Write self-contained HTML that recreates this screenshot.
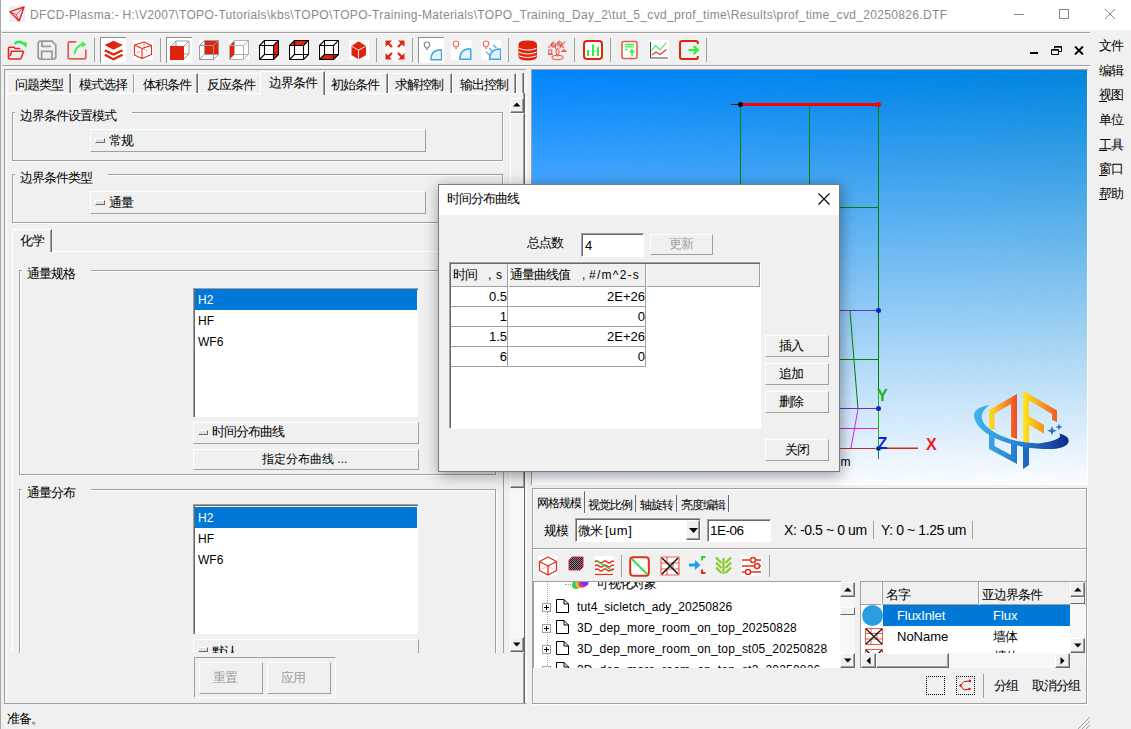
<!DOCTYPE html>
<html><head><meta charset="utf-8">
<style>
*{box-sizing:border-box}
html,body{margin:0;padding:0}
body{width:1131px;height:729px;overflow:hidden;position:relative;background:#f0f0f0;font-family:"Liberation Sans",sans-serif;font-size:12px;color:#000}
.a{position:absolute}
.t{position:absolute;white-space:nowrap;line-height:12px;font-size:12px}
.c{font-size:13px!important;letter-spacing:-1px;font-weight:500}
.hl{position:absolute;height:1px}
.vl{position:absolute;width:1px}
.btn{position:absolute;background:#f0f0f0;border-top:1px solid #fff;border-left:1px solid #fff;border-right:1px solid #a0a0a0;border-bottom:1px solid #a0a0a0}
.sunk{position:absolute;border-top:1px solid #a0a0a0;border-left:1px solid #a0a0a0;border-right:1px solid #fff;border-bottom:1px solid #fff}
.grp{position:absolute;border:1px solid #a0a0a0;box-shadow:1px 1px 0 #fff, inset 1px 1px 0 #fff}
.gl{position:absolute;background:#f0f0f0;font-size:13px;letter-spacing:-1px;font-weight:500;padding:0 16px 0 5px;line-height:12px;white-space:nowrap}
</style></head><body>

<!-- title bar -->
<div class="a" style="left:0;top:0;width:1131px;height:30px;background:#fff"></div>
<div class="vl" style="left:0;top:0;height:729px;background:#a8a8a8"></div>
<div class="t" style="left:30px;top:9px;color:#8a8a8a;letter-spacing:0.33px">DFCD-Plasma:- H:\V2007\TOPO-Tutorials\kbs\TOPO\TOPO-Training-Materials\TOPO_Training_Day_2\tut_5_cvd_prof_time\Results\prof_time_cvd_20250826.DTF</div>

<!-- toolbar lines -->
<div class="hl" style="left:2px;top:32px;width:1088px;background:#a0a0a0"></div>
<div class="hl" style="left:2px;top:33px;width:1088px;background:#fff"></div>
<div class="hl" style="left:2px;top:65px;width:1088px;background:#a0a0a0"></div>
<div class="hl" style="left:2px;top:66px;width:1088px;background:#fff"></div>

<!-- left panel -->
<div class="a" style="left:4px;top:69px;width:523px;height:635px;border-top:1px solid #a0a0a0;border-left:1px solid #a0a0a0;border-bottom:1px solid #a0a0a0;border-right:1px solid #fff"></div>

<!-- 3D view -->
<div class="a" style="left:531px;top:69px;width:557px;height:416px;background:#fff;border-top:1px solid #a0a0a0;border-left:1px solid #a0a0a0"></div>
<div class="a" style="left:532px;top:70px;width:555px;height:414px;background:linear-gradient(#0085ff,#fafcff)"></div>
<div class="a" style="left:532px;top:70px;width:555px;height:414px;background:linear-gradient(#0085dd,#fafcff);-webkit-mask-image:linear-gradient(to right,transparent,#000);mask-image:linear-gradient(to right,transparent,#000)"></div>
<!-- geometry -->
<svg class="a" style="left:532px;top:70px" width="556" height="414" viewBox="532 70 556 414">
<g stroke-width="1" fill="none">
<path d="M740.5 104V200M809.5 104V200M878.5 104V448" stroke="#008000"/>
<path d="M830 207.5H878.5M830 359.5H878.5" stroke="#008000"/>
<path d="M830 310.5H878.5M830 408.5H878.5" stroke="#7030c0"/>
<path d="M830 428.5H878.5" stroke="#e020e0"/>
<path d="M850 311L858 409" stroke="#008000"/>
<path d="M858 409L851 448" stroke="#e020e0"/>
<path d="M830 448.5H918" stroke="#c03018"/>
<path d="M878.5 448V459" stroke="#555"/>
<path d="M878.5 390V448" stroke="#20b020"/>
<path d="M878.5 448H918" stroke="#e82020"/>
<path d="M731 104.5H740" stroke="#222"/>
</g>
<path d="M740 104.5H878" stroke="#ff0000" stroke-width="3"/>
<circle cx="740.5" cy="104.5" r="2.5" fill="#200"/>
<circle cx="878.5" cy="104.5" r="2.5" fill="#ff0000"/>
<circle cx="878.5" cy="310.5" r="2.5" fill="#1020d0"/>
<circle cx="878.5" cy="408.5" r="2.5" fill="#1020d0"/>
<circle cx="878.5" cy="448.5" r="3" fill="#30e0e0"/>
<circle cx="878.5" cy="448.5" r="2" fill="#000"/>
<text x="877" y="401" font-family="Liberation Sans" font-weight="bold" font-size="16" fill="#20b020">Y</text>
<text x="877.5" y="449" font-family="Liberation Sans" font-weight="bold" font-size="16" fill="#1020e0">Z</text>
<text x="926" y="449.5" font-family="Liberation Sans" font-weight="bold" font-size="16" fill="#e82020">X</text>
<text x="840.5" y="466" font-family="Liberation Sans" font-size="12" fill="#000">m</text>
</svg>
<!-- logo -->
<svg class="a" style="left:968px;top:385px" width="107" height="90" viewBox="0 0 107 90">
<defs>
<linearGradient id="lgD" x1="21" y1="0" x2="49" y2="0" gradientUnits="userSpaceOnUse"><stop offset="0" stop-color="#ffe020"/><stop offset="1" stop-color="#ee4a26"/></linearGradient>
<linearGradient id="lgF" x1="55" y1="0" x2="89" y2="0" gradientUnits="userSpaceOnUse"><stop offset="0" stop-color="#ffe81a"/><stop offset="1" stop-color="#ee5a26"/></linearGradient>
<linearGradient id="lgS" x1="6" y1="0" x2="101" y2="0" gradientUnits="userSpaceOnUse"><stop offset="0" stop-color="#40b4ec"/><stop offset="0.5" stop-color="#2a80d0"/><stop offset="1" stop-color="#10288a"/></linearGradient>
<linearGradient id="lgB" x1="21" y1="0" x2="61" y2="0" gradientUnits="userSpaceOnUse"><stop offset="0" stop-color="#3aa4e4"/><stop offset="1" stop-color="#1f68c0"/></linearGradient>
</defs>
<path d="M21 25L49 9V54L43 52V19L26.5 28.5V45L21 43Z" fill="url(#lgD)"/>
<path d="M55 5.5L89 25.5V37L84 35V29L61 15.5V31L76 40V48.5L61 40V58L55 57Z" fill="url(#lgF)"/>
<path d="M21 45L26.5 47.5V61L43 70V56L49 57.5V79L21 64Z" fill="url(#lgB)"/>
<path d="M55 59L61 59.5V80L55 84Z" fill="#1f68c0"/>
<path d="M21.5 20Q5 23 6 31Q9 52 55 62Q97 68 100.5 57Q102 51 91 48.5Q97 55 70 58.5Q35 57 18 41Q8 30 21.5 20Z" fill="url(#lgS)"/>
<path d="M84 41l1.3 3.5l3.5 1.3l-3.5 1.3l-1.3 3.5l-1.3-3.5l-3.5-1.3l3.5-1.3Z" fill="#2a70c8"/>
<path d="M91 38.5l0.9 2.6l2.6 0.9l-2.6 0.9l-0.9 2.6l-0.9-2.6l-2.6-0.9l2.6-0.9Z" fill="#2a70c8"/>
</svg>

<!-- bottom right panel -->
<div class="a" style="left:532px;top:488px;width:555px;height:216px;border:1px solid #a0a0a0;box-shadow:inset 1px 1px 0 #fff,1px 1px 0 #fff"></div>


<!-- title icon -->
<svg class="a" style="left:9px;top:6px" width="16" height="16" viewBox="0 0 16 16">
<rect x="0" y="0" width="16" height="16" fill="#e9eef7"/>
<path d="M1 5.7L15 1L10.1 15Z" fill="none" stroke="#e8261a" stroke-width="1.4" stroke-linejoin="round"/>
<path d="M1 5.7L7.3 8.5L15 1M7.3 8.5L10.1 15" fill="none" stroke="#e8261a" stroke-width="0.9"/>
</svg>
<!-- window controls -->
<div class="hl" style="left:1014px;top:14px;width:10px;background:#8a8a8a"></div>
<div class="a" style="left:1059px;top:9px;width:10px;height:10px;border:1px solid #8a8a8a"></div>
<svg class="a" style="left:1105px;top:9px" width="10" height="10" viewBox="0 0 10 10"><path d="M0 0L10 10M10 0L0 10" stroke="#8a8a8a" stroke-width="1"/></svg>

<!-- MDI controls -->
<div class="a" style="left:1030px;top:52px;width:8px;height:2px;background:#000"></div>
<svg class="a" style="left:1051px;top:46px" width="11" height="9" viewBox="0 0 11 9"><path d="M3.5 2.5V0.5H10.5V5.5H7.5 M0.5 3.5H7.5V8.5H0.5Z M3.5 1.2H10.5 M0.5 4.2H7.5" fill="none" stroke="#000" stroke-width="1"/></svg>
<svg class="a" style="left:1074px;top:46px" width="10" height="9" viewBox="0 0 10 9"><path d="M1 0.5L9 8.5M9 0.5L1 8.5" stroke="#000" stroke-width="1.8"/></svg>

<!-- right menu -->
<div class="t c" style="left:1099px;top:39px;line-height:13px">文件</div>
<div class="t c" style="left:1099px;top:64px;line-height:13px">编辑</div>
<div class="t c" style="left:1099px;top:88px;line-height:13px">视图</div>
<div class="t c" style="left:1099px;top:113px;line-height:13px">单位</div>
<div class="t c" style="left:1099px;top:138px;line-height:13px">工具</div>
<div class="t c" style="left:1099px;top:162px;line-height:13px">窗口</div>
<div class="t c" style="left:1099px;top:187px;line-height:13px">帮助</div>
<div class="hl" style="left:1099px;top:101px;width:8px;background:#000"></div>
<div class="hl" style="left:1099px;top:150px;width:8px;background:#000"></div>
<div class="hl" style="left:1099px;top:175px;width:8px;background:#000"></div>
<div class="hl" style="left:1099px;top:199px;width:8px;background:#000"></div>

<!-- toolbar separators -->
<div class="vl" style="left:94px;top:38px;height:24px;background:#a0a0a0"></div>
<div class="vl" style="left:160px;top:38px;height:24px;background:#a0a0a0"></div>
<div class="vl" style="left:376px;top:38px;height:24px;background:#a0a0a0"></div>
<div class="vl" style="left:412px;top:38px;height:24px;background:#a0a0a0"></div>
<div class="vl" style="left:508px;top:38px;height:24px;background:#a0a0a0"></div>
<div class="vl" style="left:574px;top:38px;height:24px;background:#a0a0a0"></div>
<div class="vl" style="left:610px;top:38px;height:24px;background:#a0a0a0"></div>
<div class="vl" style="left:706px;top:38px;height:24px;background:#a0a0a0"></div>
<!-- pressed buttons -->
<div class="a" style="left:100px;top:37px;width:26px;height:26px;background:#fff;border-top:1px solid #8c8c8c;border-left:1px solid #8c8c8c"></div>
<div class="a" style="left:166px;top:37px;width:26px;height:26px;background:#fff;border-top:1px solid #8c8c8c;border-left:1px solid #8c8c8c"></div>
<div class="a" style="left:418px;top:37px;width:26px;height:26px;background:#fff;border-top:1px solid #8c8c8c;border-left:1px solid #8c8c8c"></div>

<!-- toolbar icons -->
<svg class="a" style="left:7px;top:40px" width="20" height="20" viewBox="0 0 20 20">
<rect width="20" height="20" fill="#e9eef6"/>
<path d="M1.5 18V8.2Q1.5 7.3 2.5 7.3H7L8.2 8.5H12.5" fill="none" stroke="#e8261a" stroke-width="1.6" stroke-linecap="round"/>
<path d="M3.2 15.5L4.6 11.2H15.8Q16.8 11.2 16.4 12.3L14 18.3Q13.7 19 12.8 19H2.6Q1.5 19 1.5 18" fill="none" stroke="#e8261a" stroke-width="1.6" stroke-linecap="round" stroke-linejoin="round"/>
<path d="M7.3 4Q11.5 0 16 3" fill="none" stroke="#2ee83e" stroke-width="2.3"/>
<path d="M13.8 3L19.8 2.2L19.5 7.5Z" fill="#2ee83e"/>
</svg>
<svg class="a" style="left:37px;top:40px" width="20" height="20" viewBox="0 0 20 20">
<path d="M2.5 1.2H15L18.8 5V17.5L16.8 19.3H3L1.2 17.5V3Z" fill="none" stroke="#999" stroke-width="1.7" stroke-linejoin="round"/>
<path d="M5 1.2V6.3H14" fill="none" stroke="#999" stroke-width="1.7"/>
<path d="M4.6 19V11.3H15V19" fill="none" stroke="#999" stroke-width="1.7"/>
</svg>
<svg class="a" style="left:67px;top:40px" width="20" height="20" viewBox="0 0 20 20">
<path d="M8.7 1.8H2.6Q1.2 1.8 1.2 3.2V17.5Q1.2 18.8 2.6 18.8H17.5Q18.8 18.8 18.8 17.5V10" fill="none" stroke="#e85a4a" stroke-width="1.7" stroke-linecap="round"/>
<path d="M7.6 13.5Q9 6 16 3.8" fill="none" stroke="#38ee48" stroke-width="1.8" stroke-linecap="round"/>
<path d="M14.5 1.2L19.3 4.2L15.2 7.5Z" fill="#38ee48"/>
</svg>
<!-- layers -->
<svg class="a" style="left:104px;top:40px" width="20" height="21" viewBox="0 0 20 21">
<path d="M0.5 5L9.5 0.7L18.8 5L9.5 9.8Z" fill="#e0230c"/>
<path d="M0.8 10.2L9.5 14.5L18.5 10.2" fill="none" stroke="#e0230c" stroke-width="2.3"/>
<path d="M0.8 14.8L9.5 19.2L18.5 14.8" fill="none" stroke="#e0230c" stroke-width="2.3"/>
</svg>
<!-- wire cube red -->
<svg class="a" style="left:133px;top:40px" width="20" height="20" viewBox="0 0 20 20">
<rect width="20" height="20" fill="#fff"/>
<path d="M1.5 5L11 2L18.5 5.5V14.5L9 18.5L1.5 15Z M1.5 5L9 8.5L18.5 5.5 M9 8.5V18.5" fill="none" stroke="#e0301c" stroke-width="1.1" stroke-linejoin="round"/>
<path d="M4 13L7 11.5M11 3.5V10M13 10L15 12" fill="none" stroke="#e0301c" stroke-width="0.8" stroke-dasharray="1.5 1"/>
</svg>

<svg class="a" style="left:170px;top:40px" width="20" height="20" viewBox="0 0 20 20">
<rect width="20" height="20" fill="#fff"/>
<path d="M0.5 6.5H13.5V19.5H0.5Z M6 1H19V14H6Z M0.5 6.5L6 1 M13.5 6.5L19 1 M13.5 19.5L19 14 M0.5 19.5L6 14" fill="none" stroke="#9a9a9a" stroke-width="1.0"/>
<path d="M0 6H14V20H0Z" fill="#e0230c"/>
</svg><svg class="a" style="left:199px;top:40px" width="20" height="20" viewBox="0 0 20 20">
<rect width="20" height="20" fill="#fff"/>
<path d="M5.5 0.5H19.5V14.5H5.5Z" fill="#e0230c"/>
<path d="M0.5 5.5H14.5V19.5H0.5Z M5.5 0.5H19.5V14.5H5.5Z M0.5 5.5L5.5 0.5 M14.5 5.5L19.5 0.5 M14.5 19.5L19.5 14.5 M0.5 19.5L5.5 14.5" fill="none" stroke="#9a9a9a" stroke-width="1.0"/>
</svg><svg class="a" style="left:229px;top:40px" width="20" height="20" viewBox="0 0 20 20">
<rect width="20" height="20" fill="#fff"/>
<path d="M0.5 5.5L5.5 0.5V14.5L0.5 19.5Z" fill="#e0230c"/>
<path d="M0.5 5.5H14.5V19.5H0.5Z M5.5 0.5H19.5V14.5H5.5Z M0.5 5.5L5.5 0.5 M14.5 5.5L19.5 0.5 M14.5 19.5L19.5 14.5 M0.5 19.5L5.5 14.5" fill="none" stroke="#b0b0b0" stroke-width="1.0"/>
</svg><svg class="a" style="left:259px;top:40px" width="20" height="20" viewBox="0 0 20 20">
<rect width="20" height="20" fill="#fff"/>
<path d="M14.5 5.5L19.5 0.5V14.5L14.5 19.5Z" fill="#e0230c"/>
<path d="M0.5 5.5H14.5V19.5H0.5Z M5.5 0.5H19.5V14.5H5.5Z M0.5 5.5L5.5 0.5 M14.5 5.5L19.5 0.5 M14.5 19.5L19.5 14.5 M0.5 19.5L5.5 14.5" fill="none" stroke="#000" stroke-width="1.1"/>
</svg><svg class="a" style="left:289px;top:40px" width="20" height="20" viewBox="0 0 20 20">
<rect width="20" height="20" fill="#fff"/>
<path d="M0.5 5.5L5.5 0.5H19.5L14.5 5.5Z" fill="#e0230c"/>
<path d="M0.5 5.5H14.5V19.5H0.5Z M5.5 0.5H19.5V14.5H5.5Z M0.5 5.5L5.5 0.5 M14.5 5.5L19.5 0.5 M14.5 19.5L19.5 14.5 M0.5 19.5L5.5 14.5" fill="none" stroke="#000" stroke-width="1.1"/>
</svg><svg class="a" style="left:319px;top:40px" width="20" height="20" viewBox="0 0 20 20">
<rect width="20" height="20" fill="#fff"/>
<path d="M0.5 19.5L5.5 14.5H19.5L14.5 19.5Z" fill="#e0230c"/>
<path d="M0.5 5.5H14.5V19.5H0.5Z M5.5 0.5H19.5V14.5H5.5Z M0.5 5.5L5.5 0.5 M14.5 5.5L19.5 0.5 M14.5 19.5L19.5 14.5 M0.5 19.5L5.5 14.5" fill="none" stroke="#000" stroke-width="1.1"/>
</svg>
<svg class="a" style="left:349px;top:40px" width="20" height="20" viewBox="0 0 20 20">
<rect width="20" height="20" fill="#fff"/>
<path d="M2.5 6L9.5 1.2L17 6V15L9.5 19.6L2.5 15Z" fill="#e0230c"/>
<path d="M2.8 6.3L9.5 10.2L16.7 6.3M9.5 10.2V19.3" fill="none" stroke="#fff" stroke-width="0.9"/>
</svg>
<svg class="a" style="left:385px;top:40px" width="20" height="20" viewBox="0 0 20 20">
<rect width="20" height="20" fill="#fff"/>
<g fill="#e0230c" stroke="#e0230c" stroke-width="2.2">
<path d="M2 2L7 7M18 2L13 7M2 18L7 13M18 18L13 13" fill="none"/>
</g>
<path d="M0.5 0.5H7L0.5 7Z M19.5 0.5H13L19.5 7Z M0.5 19.5H7L0.5 13Z M19.5 19.5H13L19.5 13Z" fill="#e0230c"/>
</svg>
<!-- bulbs -->
<svg class="a" style="left:422px;top:40px" width="20" height="21" viewBox="0 0 20 21">
<path d="M4.3 8Q2.2 6.3 2.2 4.7Q2.2 2 5 2Q7.8 2 7.8 4.7Q7.8 6.3 5.7 8Z" fill="#fff" stroke="#8a8a8a" stroke-width="1.2"/>
<path d="M4 9.2H6" stroke="#8a8a8a" stroke-width="1.2"/>
<path d="M8.8 19.8Q8.8 10 18.6 9.7Q19.6 9.7 19.6 10.7V19.8Z" fill="#e4f2fb" stroke="#40a8e0" stroke-width="1.5" stroke-linejoin="round"/>
</svg>
<svg class="a" style="left:451px;top:40px" width="21" height="21" viewBox="0 0 21 21">
<rect width="20.3" height="20" fill="#fff"/>
<path d="M4.3 7Q2.2 5.3 2.2 3.7Q2.2 1 5 1Q7.8 1 7.8 3.7Q7.8 5.3 5.7 7Z" fill="#fff" stroke="#e87060" stroke-width="1.2"/>
<path d="M4 8.2H6" stroke="#e87060" stroke-width="1.2"/>
<path d="M8.8 19.3Q8.8 9 19 8.7Q19.8 8.7 19.8 9.7V19.3Z" fill="#e4f2fb" stroke="#40a8e0" stroke-width="1.5" stroke-linejoin="round"/>
</svg>
<svg class="a" style="left:481px;top:40px" width="20" height="20" viewBox="0 0 20 20">
<rect width="20" height="20" fill="#fff"/>
<path d="M4.3 7Q2.2 5.3 2.2 3.7Q2.2 1 5 1Q7.8 1 7.8 3.7Q7.8 5.3 5.7 7Z" fill="#fff" stroke="#e87060" stroke-width="1.2"/>
<path d="M4 8.2H6" stroke="#e87060" stroke-width="1.2"/>
<path d="M8.5 19.3Q8.5 9.5 18.8 9Q19.6 9 19.6 10V19.3Z" fill="#e4f2fb" stroke="#40a8e0" stroke-width="1.5" stroke-linejoin="round"/>
<path d="M5.1 11.7L9.2 15.8M8.1 8L11.4 11.4M12.2 5L15.5 8" stroke="#40a8e0" stroke-width="1.1"/>
</svg>
<!-- database -->
<svg class="a" style="left:518px;top:40px" width="20" height="21" viewBox="0 0 20 21">
<path d="M0.5 4.5Q0.5 0.6 9.7 0.6Q19 0.6 19 4.5V16.5Q19 20.4 9.7 20.4Q0.5 20.4 0.5 16.5Z" fill="#e0230c"/>
<path d="M1 8.3Q9.7 12 18.5 8.3M1 12.2Q9.7 15.8 18.5 12.2M1 15.8Q9.7 19.2 18.5 15.8" fill="none" stroke="#fff" stroke-width="1"/>
</svg>
<!-- network -->
<svg class="a" style="left:547px;top:40px" width="21" height="21" viewBox="0 0 21 21">
<g fill="none" stroke="#e85a4a" stroke-width="1.1">
<path d="M1.5 8L4.5 4L8 6.5L11 2.5L14.5 5.5L18 1.5M4.5 4L6.5 1.5M11 2.5L12.5 0.5M14.5 5.5L17 8M8 6.5L9 9.5M14.5 5.5L12.5 8.5"/>
<circle cx="6.5" cy="5" r="2"/><circle cx="12.8" cy="4" r="2"/>
<rect x="1.8" y="10" width="3" height="3.8"/>
<path d="M1 14.5H6M15 11.5L17 9.5L19 11.5Z"/>
<path d="M10.5 8.5Q13.5 12 10.5 16Q7.5 12 10.5 8.5Z"/>
<ellipse cx="10.5" cy="17.5" rx="5.5" ry="2.2"/>
</g>
</svg>
<!-- chart -->
<svg class="a" style="left:583px;top:40px" width="20" height="20" viewBox="0 0 20 20">
<rect x="1" y="1" width="18" height="18" rx="3" fill="#fff" stroke="#e0230c" stroke-width="2"/>
<path d="M5 16V10M10 16V4.5M15 16V7" stroke="#2cef3a" stroke-width="2"/>
</svg>
<!-- doc -->
<svg class="a" style="left:621px;top:40px" width="17" height="20" viewBox="0 0 17 20">
<rect x="1" y="1.5" width="15" height="17" rx="2" fill="#fff" stroke="#e85a4a" stroke-width="1.6"/>
<path d="M4 4.5H13M4 6.8H13M4 9.3H7" stroke="#3af04a" stroke-width="1.3"/>
<path d="M11 16.5V10.5M8.8 12.5L11 10L13.2 12.5" fill="none" stroke="#3af04a" stroke-width="1.6"/>
</svg>
<!-- linechart -->
<svg class="a" style="left:649px;top:40px" width="20" height="20" viewBox="0 0 20 20">
<rect width="20" height="20" fill="#fff"/>
<path d="M1.5 2V18H19" fill="none" stroke="#444" stroke-width="1"/>
<path d="M2.5 11L6.5 5.5L11 10L17.5 2.5" fill="none" stroke="#33ee44" stroke-width="1.1"/>
<path d="M3 15L7 12L11 14.5L17.5 9.5" fill="none" stroke="#dd3355" stroke-width="1.1"/>
</svg>
<!-- exit -->
<svg class="a" style="left:679px;top:40px" width="20" height="20" viewBox="0 0 20 20">
<path d="M18.8 4V2.8Q18.8 1 17 1H3Q1 1 1 3V17Q1 19 3 19H17Q18.8 19 18.8 17.2V16" fill="none" stroke="#e0230c" stroke-width="2"/>
<path d="M9.5 10H18" stroke="#2cef3a" stroke-width="2.2"/>
<path d="M14.5 6L19 10L14.5 14" fill="none" stroke="#2cef3a" stroke-width="2.2"/>
</svg>


<!-- LEFT PANEL CONTENT -->
<!-- tabs -->
<div class="a" style="left:7px;top:73px;width:64px;height:20px;border-top:1px solid #fff;border-left:1px solid #fff;border-right:1px solid #696969;box-shadow:inset -1px 0 0 #a0a0a0"></div>
<div class="t c" style="left:15px;top:79px">问题类型</div>
<div class="a" style="left:71px;top:73px;width:64px;height:20px;border-top:1px solid #fff;border-left:1px solid #fff;border-right:1px solid #696969;box-shadow:inset -1px 0 0 #a0a0a0"></div>
<div class="t c" style="left:79px;top:79px">模式选择</div>
<div class="a" style="left:134px;top:73px;width:64px;height:20px;border-top:1px solid #fff;border-left:1px solid #fff;border-right:1px solid #696969;box-shadow:inset -1px 0 0 #a0a0a0"></div>
<div class="t c" style="left:143px;top:79px">体积条件</div>
<div class="a" style="left:198px;top:73px;width:64px;height:20px;border-top:1px solid #fff;border-left:1px solid #fff;border-right:1px solid #696969;box-shadow:inset -1px 0 0 #a0a0a0"></div>
<div class="t c" style="left:207px;top:79px">反应条件</div>
<div class="a" style="left:325px;top:73px;width:63px;height:20px;border-top:1px solid #fff;border-left:1px solid #fff;border-right:1px solid #696969;box-shadow:inset -1px 0 0 #a0a0a0"></div>
<div class="t c" style="left:331px;top:79px">初始条件</div>
<div class="a" style="left:388px;top:73px;width:64px;height:20px;border-top:1px solid #fff;border-left:1px solid #fff;border-right:1px solid #696969;box-shadow:inset -1px 0 0 #a0a0a0"></div>
<div class="t c" style="left:395px;top:79px">求解控制</div>
<div class="a" style="left:452px;top:73px;width:64px;height:20px;border-top:1px solid #fff;border-left:1px solid #fff;border-right:1px solid #696969;box-shadow:inset -1px 0 0 #a0a0a0"></div>
<div class="t c" style="left:460px;top:79px">输出控制</div>
<div class="a" style="left:516px;top:73px;width:8px;height:20px;border-left:1px solid #fff;border-right:1px solid #696969;box-shadow:inset -1px 0 0 #a0a0a0"></div>
<div class="hl" style="left:6px;top:93px;width:518px;background:#fff"></div>
<div class="a" style="left:260px;top:71px;width:65px;height:24px;background:#f0f0f0;border-top:1px solid #fff;border-left:1px solid #fff;border-right:1px solid #696969;box-shadow:inset -1px 0 0 #a0a0a0"></div>
<div class="t c" style="left:269px;top:77px">边界条件</div>
<div class="vl" style="left:6px;top:93px;height:610px;background:#fff"></div>
<div class="vl" style="left:524px;top:93px;height:610px;background:#696969"></div>
<div class="vl" style="left:523px;top:93px;height:610px;background:#a0a0a0"></div>

<!-- scrollbar -->
<div class="a" style="left:510px;top:98px;width:14px;height:555px;background:#f0f0f0"></div>
<div class="a" style="left:510px;top:487px;width:14px;height:150px;background:repeating-conic-gradient(#f0f0f0 0 25%,#fff 0 50%) 0 0/2px 2px"></div>
<div class="btn" style="left:510px;top:113px;width:15px;height:375px;border-right-color:#696969;border-bottom-color:#696969;box-shadow:inset -1px -1px 0 #a0a0a0"></div>
<div class="btn" style="left:510px;top:98px;width:14px;height:15px;border-right-color:#696969;border-bottom-color:#696969;box-shadow:inset -1px -1px 0 #a0a0a0"></div>
<svg class="a" style="left:513px;top:102px" width="8" height="5"><path d="M0 4.5H7.5L3.75 0.5Z" fill="#000"/></svg>
<div class="btn" style="left:510px;top:637px;width:14px;height:15px;border-right-color:#696969;border-bottom-color:#696969;box-shadow:inset -1px -1px 0 #a0a0a0"></div>
<svg class="a" style="left:513px;top:642px" width="8" height="5"><path d="M0 0.5H7.5L3.75 4.5Z" fill="#000"/></svg>

<!-- groupbox 1 -->
<div class="grp" style="left:12px;top:112px;width:491px;height:49px"></div>
<div class="gl" style="left:15px;top:110px">边界条件设置模式</div>
<div class="btn" style="left:90px;top:129px;width:336px;height:23px"></div>
<div class="a" style="left:95px;top:138px;width:10px;height:5px;border-top:1px solid #fff;border-left:1px solid #fff;border-right:1px solid #696969;border-bottom:1px solid #696969;background:#e0e0e0"></div>
<div class="t c" style="left:109px;top:135px">常规</div>

<!-- groupbox 2 -->
<div class="grp" style="left:12px;top:174px;width:491px;height:49px"></div>
<div class="gl" style="left:15px;top:172px">边界条件类型</div>
<div class="btn" style="left:90px;top:191px;width:336px;height:23px"></div>
<div class="a" style="left:95px;top:200px;width:10px;height:5px;border-top:1px solid #fff;border-left:1px solid #fff;border-right:1px solid #696969;border-bottom:1px solid #696969;background:#e0e0e0"></div>
<div class="t c" style="left:109px;top:197px">通量</div>

<!-- chem tab -->
<div class="hl" style="left:12px;top:251px;width:491px;background:#fff"></div>
<div class="a" style="left:12px;top:229px;width:40px;height:23px;background:#f0f0f0;border-top:1px solid #fff;border-left:1px solid #fff;border-right:1px solid #696969;box-shadow:inset -1px 0 0 #a0a0a0"></div>
<div class="t c" style="left:20px;top:235px">化学</div>
<div class="vl" style="left:12px;top:252px;height:401px;background:#fff"></div>
<div class="vl" style="left:503px;top:252px;height:401px;background:#a0a0a0"></div>

<!-- groupbox 通量规格 -->
<div class="grp" style="left:19px;top:270px;width:477px;height:205px"></div>
<div class="gl" style="left:22px;top:268px">通量规格</div>
<div class="a" style="left:193px;top:288px;width:225px;height:129px;background:#fff;border-top:1px solid #a0a0a0;border-left:1px solid #a0a0a0;box-shadow:inset 1px 1px 0 #696969"></div>
<div class="a" style="left:195px;top:289px;width:222px;height:21px;background:#0078d7"></div>
<div class="t" style="left:198px;top:294px;color:#fff">H2</div>
<div class="t" style="left:198px;top:315px">HF</div>
<div class="t" style="left:198px;top:336px">WF6</div>
<div class="btn" style="left:193px;top:422px;width:226px;height:22px"></div>
<div class="a" style="left:198px;top:430px;width:10px;height:5px;border-top:1px solid #fff;border-left:1px solid #fff;border-right:1px solid #696969;border-bottom:1px solid #696969;background:#e0e0e0"></div>
<div class="t c" style="left:212px;top:426px">时间分布曲线</div>
<div class="btn" style="left:193px;top:449px;width:226px;height:21px"></div>
<div class="t" style="left:262px;top:453px">指定分布曲线 ...</div>

<!-- groupbox 通量分布 (clipped) -->
<div class="a" style="left:12px;top:486px;width:497px;height:167px;overflow:hidden">
  <div class="grp" style="left:7px;top:3px;width:477px;height:300px"></div>
  <div class="gl" style="left:10px;top:1px">通量分布</div>
  <div class="a" style="left:181px;top:18px;width:225px;height:130px;background:#fff;border-top:1px solid #a0a0a0;border-left:1px solid #a0a0a0;box-shadow:inset 1px 1px 0 #696969"></div>
  <div class="a" style="left:183px;top:21px;width:222px;height:21px;background:#0078d7"></div>
  <div class="t" style="left:186px;top:26px;color:#fff">H2</div>
  <div class="t" style="left:186px;top:47px">HF</div>
  <div class="t" style="left:186px;top:68px">WF6</div>
  <div class="btn" style="left:181px;top:153px;width:226px;height:22px"></div>
  <div class="a" style="left:186px;top:161px;width:10px;height:5px;border-top:1px solid #fff;border-left:1px solid #fff;border-right:1px solid #696969;border-bottom:1px solid #696969;background:#e0e0e0"></div>
  <div class="t c" style="left:200px;top:160px">默认</div>
</div>

<!-- reset/apply -->
<div class="a" style="left:194px;top:657px;width:142px;height:41px;border-top:1px solid #a0a0a0;border-left:1px solid #a0a0a0;border-right:1px solid #fff;border-bottom:1px solid #fff"></div>
<div class="btn" style="left:199px;top:662px;width:64px;height:32px"></div>
<div class="t c" style="left:213px;top:672px;color:#a0a0a0">重置</div>
<div class="btn" style="left:267px;top:662px;width:64px;height:32px"></div>
<div class="t c" style="left:281px;top:672px;color:#a0a0a0">应用</div>



<!-- BOTTOM RIGHT PANEL -->
<div class="a" style="left:533px;top:491px;width:52px;height:22px;border-top:1px solid #fff;border-left:1px solid #fff;border-right:1px solid #696969;border-top-left-radius:2px"></div>
<div class="t" style="left:537px;top:497px;font-size:12px;letter-spacing:-1px;line-height:12px">网格规模</div>
<div class="a" style="left:585px;top:495px;width:51px;height:17px;border-right:1px solid #696969"></div>
<div class="t" style="left:588px;top:499px;font-size:12px;letter-spacing:-1px;line-height:12px">视觉比例</div>
<div class="a" style="left:636px;top:495px;width:41px;height:17px;border-right:1px solid #696969"></div>
<div class="t" style="left:640px;top:499px;font-size:12px;letter-spacing:-1px;line-height:12px">轴旋转</div>
<div class="a" style="left:677px;top:495px;width:52px;height:17px;border-right:1px solid #696969"></div>
<div class="t" style="left:681px;top:499px;font-size:12px;letter-spacing:-1px;line-height:12px">亮度编辑</div>

<div class="t c" style="left:544px;top:525px">规模</div>
<div class="a" style="left:575px;top:518px;width:126px;height:24px;background:#fff;border-top:1px solid #a0a0a0;border-left:1px solid #a0a0a0;border-right:1px solid #fff;border-bottom:1px solid #fff;box-shadow:inset 1px 1px 0 #696969"></div>
<div class="t c" style="left:578px;top:525px">微米</div><div class="t" style="left:605px;top:525px;font-size:13px;letter-spacing:0.5px">[um]</div>
<div class="btn" style="left:686px;top:520px;width:14px;height:20px;border-right-color:#696969;border-bottom-color:#696969;box-shadow:inset -1px -1px 0 #a0a0a0"></div>
<svg class="a" style="left:689px;top:528px" width="9" height="5"><path d="M0 0H9L4.5 5Z" fill="#000"/></svg>
<div class="a" style="left:707px;top:519px;width:64px;height:23px;background:#fff;border-top:1px solid #a0a0a0;border-left:1px solid #a0a0a0;border-right:1px solid #fff;border-bottom:1px solid #fff;box-shadow:inset 1px 1px 0 #696969"></div>
<div class="t" style="left:710px;top:525px;font-size:13.5px;letter-spacing:-0.5px">1E-06</div>
<div class="t" style="left:784px;top:524px;font-size:14px;letter-spacing:-0.4px">X: -0.5 ~ 0 um</div>
<div class="vl" style="left:873px;top:521px;height:18px;background:#a0a0a0"></div>
<div class="t" style="left:881px;top:524px;font-size:14px;letter-spacing:-0.4px">Y: 0 ~ 1.25 um</div>
<div class="vl" style="left:972px;top:521px;height:18px;background:#a0a0a0"></div>

<div class="hl" style="left:533px;top:548px;width:553px;background:#a0a0a0"></div>
<div class="hl" style="left:533px;top:549px;width:553px;background:#fff"></div>

<!-- bottom toolbar icons -->
<svg class="a" style="left:538px;top:556px" width="20" height="20" viewBox="0 0 20 20">
<rect width="20" height="20" fill="#fff"/>
<path d="M10 1L18.5 5.5V14.5L10 19L1.5 14.5V5.5Z M1.5 5.5L10 10L18.5 5.5 M10 10V19" fill="none" stroke="#e0301c" stroke-width="1.3" stroke-linejoin="round"/>
<path d="M4 13L10 10L15 13" fill="none" stroke="#e0301c" stroke-width="0.7" stroke-dasharray="1 1"/>
</svg>
<svg class="a" style="left:568px;top:556px" width="16" height="15" viewBox="0 0 16 15">
<defs><pattern id="chk" width="2" height="2" patternUnits="userSpaceOnUse"><rect width="2" height="2" fill="#888"/><rect width="1" height="1" fill="#111"/><rect x="1" y="1" width="1" height="1" fill="#111"/></pattern></defs>
<path d="M1 4L4 1H15V11L12 14H1Z" fill="url(#chk)" stroke="#d02070" stroke-width="1"/>
<path d="M1 4H12V14M12 4L15 1" fill="none" stroke="#d02070" stroke-width="0.8"/>
</svg>
<svg class="a" style="left:594px;top:556px" width="20" height="20" viewBox="0 0 20 20">
<rect width="20" height="20" fill="#fff"/>
<path d="M1 6Q3 4 5 6T9 6T13 6T17 6T20 6 M1 10Q3 8 5 10T9 10T13 10T17 10T20 10 M1 14Q3 12 5 14T9 14T13 14T17 14T20 14" fill="none" stroke="#e0301c" stroke-width="1.3"/>
<path d="M1 18.5H19" stroke="#e0301c" stroke-width="1.3"/>
<path d="M1 4L19 15" stroke="#30d040" stroke-width="1.3"/>
</svg>
<div class="vl" style="left:621px;top:555px;height:22px;background:#a0a0a0"></div>
<svg class="a" style="left:629px;top:556px" width="21" height="21" viewBox="0 0 21 21">
<rect x="1.2" y="1.2" width="18.6" height="18.6" rx="3" fill="#fff" stroke="#e0301c" stroke-width="2"/>
<path d="M3 3L18 18" stroke="#30e040" stroke-width="2"/>
</svg>
<svg class="a" style="left:660px;top:556px" width="20" height="20" viewBox="0 0 20 20">
<rect width="20" height="20" fill="#fff"/>
<path d="M1 1H19V19H1Z M1 7H19M1 13H19M7 1V7M13 7V13M7 13V19" fill="none" stroke="#e85a4a" stroke-width="1.2"/>
<path d="M2 2L18 18M18 2L2 18" stroke="#111" stroke-width="1.5"/>
</svg>
<svg class="a" style="left:689px;top:556px" width="17" height="18" viewBox="0 0 17 18">
<path d="M0 9H7" stroke="#1aa0e8" stroke-width="3"/>
<path d="M6 4L11.5 9L6 14Z" fill="#1aa0e8"/>
<path d="M16.5 1H13V4.5" fill="none" stroke="#30d040" stroke-width="2"/>
<path d="M13 13.5V17H16.5" fill="none" stroke="#e0301c" stroke-width="2"/>
</svg>
<svg class="a" style="left:715px;top:556px" width="17" height="19" viewBox="0 0 17 19">
<path d="M1 1.5L6.5 7M1 6.5L6.5 12M1 11.5L6.5 17 M16 1.5L10.5 7M16 6.5L10.5 12M16 11.5L10.5 17 M8.5 2V18" fill="none" stroke="#8ac830" stroke-width="2.2"/>
</svg>
<svg class="a" style="left:741px;top:556px" width="21" height="20" viewBox="0 0 21 20">
<rect width="21" height="20" fill="#fff"/>
<path d="M1 4H20M1 10H20M1 16H20" stroke="#e0301c" stroke-width="1.5"/>
<circle cx="12" cy="4" r="2.5" fill="#fff" stroke="#e0301c" stroke-width="1.5"/>
<circle cx="16" cy="10" r="2.5" fill="#fff" stroke="#e0301c" stroke-width="1.5"/>
<circle cx="7" cy="16" r="2.5" fill="#fff" stroke="#e0301c" stroke-width="1.5"/>
</svg>
<div class="vl" style="left:769px;top:555px;height:22px;background:#a0a0a0"></div>

<!-- tree -->
<div class="a" style="left:533px;top:581px;width:308px;height:87px;background:#fff;overflow:hidden;border-top:1px solid #a0a0a0;border-left:1px solid #a0a0a0">
  <div class="a" style="left:13px;top:0;width:0;height:87px;border-left:1px dotted #a0a0a0"></div>
  <div class="a" style="left:31px;top:2px;width:6px;height:0;border-top:1px dotted #a0a0a0"></div>
  <svg class="a" style="left:38px;top:-4px" width="17" height="13" viewBox="0 0 17 13"><circle cx="4" cy="7" r="4" fill="#30d050"/><circle cx="7.5" cy="6" r="4" fill="#e0c020"/><circle cx="10.5" cy="5.5" r="4" fill="#e03090"/><circle cx="13" cy="4.5" r="3.5" fill="#8030e0"/></svg>
  <div class="t c" style="left:62px;top:-4px">可视化对象</div>
  <div class="a" style="left:8px;top:21px;width:9px;height:9px;border:1px solid #a0a0a0;background:#fff"></div>
  <div class="a" style="left:10px;top:25px;width:5px;height:1px;background:#000"></div>
  <div class="a" style="left:12px;top:23px;width:1px;height:5px;background:#000"></div>
  <div class="a" style="left:8px;top:42px;width:9px;height:9px;border:1px solid #a0a0a0;background:#fff"></div>
  <div class="a" style="left:10px;top:46px;width:5px;height:1px;background:#000"></div>
  <div class="a" style="left:12px;top:44px;width:1px;height:5px;background:#000"></div>
  <div class="a" style="left:8px;top:63px;width:9px;height:9px;border:1px solid #a0a0a0;background:#fff"></div>
  <div class="a" style="left:10px;top:67px;width:5px;height:1px;background:#000"></div>
  <div class="a" style="left:12px;top:65px;width:1px;height:5px;background:#000"></div>
  <div class="a" style="left:8px;top:84px;width:9px;height:9px;border:1px solid #a0a0a0;background:#fff"></div>
  <svg class="a" style="left:22px;top:17px" width="13" height="14" viewBox="0 0 13 14"><path d="M0.5 0.5H8L12.5 5V13.5H0.5Z M8 0.5V5H12.5" fill="#fff" stroke="#000" stroke-width="1"/></svg>
  <svg class="a" style="left:22px;top:38px" width="13" height="14" viewBox="0 0 13 14"><path d="M0.5 0.5H8L12.5 5V13.5H0.5Z M8 0.5V5H12.5" fill="#fff" stroke="#000" stroke-width="1"/></svg>
  <svg class="a" style="left:22px;top:59px" width="13" height="14" viewBox="0 0 13 14"><path d="M0.5 0.5H8L12.5 5V13.5H0.5Z M8 0.5V5H12.5" fill="#fff" stroke="#000" stroke-width="1"/></svg>
  <svg class="a" style="left:22px;top:80px" width="13" height="14" viewBox="0 0 13 14"><path d="M0.5 0.5H8L12.5 5V13.5H0.5Z M8 0.5V5H12.5" fill="#fff" stroke="#000" stroke-width="1"/></svg>
  <div class="t" style="left:43px;top:19px;letter-spacing:0.1px">tut4_sicletch_ady_20250826</div>
  <div class="t" style="left:43px;top:40px;letter-spacing:0.2px">3D_dep_more_room_on_top_20250828</div>
  <div class="t" style="left:43px;top:61px;letter-spacing:0.2px">3D_dep_more_room_on_top_st05_20250828</div>
  <div class="t" style="left:43px;top:82px;letter-spacing:0.2px">3D_dep_more_room_on_top_st2_20250826</div>
</div>
<!-- tree scrollbar -->
<div class="a" style="left:840px;top:582px;width:15px;height:86px;background:repeating-conic-gradient(#f0f0f0 0 25%,#fff 0 50%) 0 0/2px 2px"></div>
<div class="btn" style="left:840px;top:582px;width:15px;height:15px;border-right-color:#696969;border-bottom-color:#696969;box-shadow:inset -1px -1px 0 #a0a0a0"></div>
<svg class="a" style="left:844px;top:587px" width="8" height="5"><path d="M0 4.5H7.5L3.75 0.5Z" fill="#000"/></svg>
<div class="btn" style="left:840px;top:607px;width:15px;height:8px;border-right-color:#696969;border-bottom-color:#696969"></div>
<div class="btn" style="left:840px;top:653px;width:15px;height:15px;border-right-color:#696969;border-bottom-color:#696969;box-shadow:inset -1px -1px 0 #a0a0a0"></div>
<svg class="a" style="left:844px;top:658px" width="8" height="5"><path d="M0 0.5H7.5L3.75 4.5Z" fill="#000"/></svg>

<!-- property grid -->
<div class="a" style="left:860px;top:581px;width:226px;height:87px;background:#fff;border-top:1px solid #a0a0a0;border-left:1px solid #a0a0a0;overflow:hidden">
  <div class="a" style="left:0;top:0;width:225px;height:23px;background:#f0f0f0;border-bottom:1px solid #a0a0a0"></div>
  <div class="a" style="left:0;top:0;width:22px;height:23px;border-right:1px solid #a0a0a0;box-shadow:inset -1px 0 0 #fff"></div>
  <div class="vl" style="left:117px;top:0;height:23px;background:#a0a0a0"></div>
  <div class="vl" style="left:118px;top:0;height:23px;background:#fff"></div>
  <div class="t c" style="left:25px;top:7px">名字</div>
  <div class="t c" style="left:121px;top:7px">亚边界条件</div>
  <div class="a" style="left:1px;top:23px;width:209px;height:21px;background:#0078d7"></div>
  <div class="a" style="left:1px;top:23px;width:21px;height:21px;background:#fff"></div>
  <div class="a" style="left:1px;top:23px;width:21px;height:21px;border-radius:50%;background:#2a9ee0"></div>
  <div class="t" style="left:36px;top:28px;color:#fff;font-size:13px;letter-spacing:-0.1px">FluxInlet</div>
  <div class="t" style="left:132px;top:28px;color:#fff;font-size:13px">Flux</div>
  <svg class="a" style="left:4px;top:46px" width="18" height="17" viewBox="0 0 18 17"><path d="M0.5 0.5H17.5V16.5H0.5Z M0.5 5.5H17.5M0.5 11H17.5M6 0.5V5.5M12 5.5V11M6 11V16.5" fill="#fff" stroke="#e85a4a" stroke-width="1"/><path d="M1 1L17 16M17 1L1 16" stroke="#111" stroke-width="1.2"/></svg>
  <div class="t" style="left:36px;top:49px;font-size:13px">NoName</div>
  <div class="t c" style="left:132px;top:49px">墙体</div>
  <svg class="a" style="left:4px;top:67px" width="18" height="17" viewBox="0 0 18 17"><path d="M0.5 0.5H17.5V16.5H0.5Z M0.5 5.5H17.5" fill="#fff" stroke="#e85a4a" stroke-width="1"/><path d="M1 1L17 16M17 1L1 16" stroke="#111" stroke-width="1.2"/></svg>
  <div class="t c" style="left:133px;top:69px">墙体</div>
</div>
<div class="a" style="left:1070px;top:582px;width:15px;height:71px;background:repeating-conic-gradient(#f0f0f0 0 25%,#fff 0 50%) 0 0/2px 2px"></div>
<div class="btn" style="left:1070px;top:582px;width:15px;height:15px;border-right-color:#696969;border-bottom-color:#696969;box-shadow:inset -1px -1px 0 #a0a0a0"></div>
<svg class="a" style="left:1074px;top:587px" width="8" height="5"><path d="M0 4.5H7.5L3.75 0.5Z" fill="#000"/></svg>
<div class="btn" style="left:1070px;top:597px;width:15px;height:7px;border-right-color:#696969;border-bottom-color:#696969"></div>
<div class="btn" style="left:1070px;top:638px;width:15px;height:15px;border-right-color:#696969;border-bottom-color:#696969;box-shadow:inset -1px -1px 0 #a0a0a0"></div>
<svg class="a" style="left:1074px;top:643px" width="8" height="5"><path d="M0 0.5H7.5L3.75 4.5Z" fill="#000"/></svg>
<div class="a" style="left:861px;top:653px;width:209px;height:15px;background:repeating-conic-gradient(#f0f0f0 0 25%,#fff 0 50%) 0 0/2px 2px"></div>
<div class="btn" style="left:861px;top:653px;width:15px;height:15px;border-right-color:#696969;border-bottom-color:#696969;box-shadow:inset -1px -1px 0 #a0a0a0"></div>
<svg class="a" style="left:866px;top:657px" width="5" height="8"><path d="M4.5 0V7.5L0.5 3.75Z" fill="#000"/></svg>
<div class="btn" style="left:876px;top:653px;width:73px;height:15px;border-right-color:#696969;border-bottom-color:#696969;box-shadow:inset -1px -1px 0 #a0a0a0"></div>
<div class="btn" style="left:1055px;top:653px;width:15px;height:15px;border-right-color:#696969;border-bottom-color:#696969;box-shadow:inset -1px -1px 0 #a0a0a0"></div>
<svg class="a" style="left:1060px;top:657px" width="5" height="8"><path d="M0.5 0V7.5L4.5 3.75Z" fill="#000"/></svg>
<div class="a" style="left:1070px;top:653px;width:15px;height:15px;background:#f0f0f0"></div>

<!-- bottom buttons -->
<div class="a" style="left:926px;top:676px;width:19px;height:19px;border:1px dotted #000"></div>
<div class="a" style="left:956px;top:676px;width:19px;height:19px;border:1px dotted #000"></div>
<svg class="a" style="left:958px;top:678px" width="15" height="15" viewBox="0 0 15 15"><path d="M12 3L6 3.5L2.5 7.5L6 12L11.5 11" fill="none" stroke="#c01010" stroke-width="1"/><circle cx="12" cy="3" r="1.2" fill="#e01010"/><circle cx="2.5" cy="7.5" r="1.2" fill="#e01010"/><circle cx="11.5" cy="11" r="1.2" fill="#e01010"/></svg>
<div class="vl" style="left:983px;top:674px;height:24px;background:#a0a0a0"></div>
<div class="t c" style="left:994px;top:680px">分组</div>
<div class="t c" style="left:1032px;top:680px">取消分组</div>
<!-- resize grip -->
<svg class="a" style="left:1075px;top:714px" width="16" height="16" viewBox="0 0 16 16"><path d="M15 3L3 15M15 7L7 15M15 11L11 15" stroke="#a0a0a0" stroke-width="1"/></svg>

<!-- DIALOG -->
<div class="a" style="left:438px;top:184px;width:402px;height:288px;background:#f0f0f0;border:1px solid #7a7a7a;box-shadow:1px 3px 14px rgba(0,0,0,0.4)"></div>
<div class="a" style="left:439px;top:185px;width:400px;height:30px;background:#fff"></div>
<div class="t c" style="left:447px;top:193px">时间分布曲线</div>
<svg class="a" style="left:818px;top:193px" width="12" height="12" viewBox="0 0 12 12"><path d="M0.5 0.5L11.5 11.5M11.5 0.5L0.5 11.5" stroke="#000" stroke-width="1.1"/></svg>
<div class="t c" style="left:527px;top:237px">总点数</div>
<div class="a" style="left:581px;top:233px;width:63px;height:24px;background:#fff;border-top:1px solid #a0a0a0;border-left:1px solid #a0a0a0;border-right:1px solid #fff;border-bottom:1px solid #fff;box-shadow:inset 1px 1px 0 #696969"></div>
<div class="t" style="left:585px;top:240px;font-size:13px">4</div>
<div class="btn" style="left:650px;top:234px;width:63px;height:21px"></div>
<div class="t c" style="left:669px;top:238px;color:#a0a0a0">更新</div>
<!-- grid -->
<div class="a" style="left:449px;top:262px;width:312px;height:167px;background:#fff;border-top:1px solid #a0a0a0;border-left:1px solid #a0a0a0;border-right:1px solid #fff;border-bottom:1px solid #fff;box-shadow:inset 1px 1px 0 #696969"></div>
<div class="a" style="left:451px;top:264px;width:309px;height:23px;background:#f0f0f0;border-bottom:1px solid #a0a0a0"></div>
<div class="vl" style="left:507px;top:264px;height:103px;background:#a0a0a0"></div>
<div class="vl" style="left:645px;top:264px;height:103px;background:#a0a0a0"></div>
<div class="vl" style="left:759px;top:264px;height:23px;background:#a0a0a0"></div>
<div class="vl" style="left:508px;top:264px;height:23px;background:#fff"></div>
<div class="vl" style="left:646px;top:264px;height:23px;background:#fff"></div>
<div class="hl" style="left:451px;top:306px;width:195px;background:#a0a0a0"></div>
<div class="hl" style="left:451px;top:326px;width:195px;background:#a0a0a0"></div>
<div class="hl" style="left:451px;top:346px;width:195px;background:#a0a0a0"></div>
<div class="hl" style="left:451px;top:366px;width:195px;background:#a0a0a0"></div>
<div class="t c" style="left:453px;top:269px">时间</div><div class="t" style="left:488px;top:269px">,</div><div class="t" style="left:496px;top:269px">s</div>
<div class="t c" style="left:510px;top:269px">通量曲线值</div><div class="t" style="left:582px;top:269px">,</div><div class="t" style="left:589px;top:269px;letter-spacing:1.25px">#/m^2-s</div>
<div class="t" style="left:451px;top:291px;width:56px;text-align:right;font-size:13px">0.5</div>
<div class="t" style="left:451px;top:311px;width:56px;text-align:right;font-size:13px">1</div>
<div class="t" style="left:451px;top:331px;width:56px;text-align:right;font-size:13px">1.5</div>
<div class="t" style="left:451px;top:351px;width:56px;text-align:right;font-size:13px">6</div>
<div class="t" style="left:509px;top:291px;width:136px;text-align:right;font-size:13px">2E+26</div>
<div class="t" style="left:509px;top:311px;width:136px;text-align:right;font-size:13px">0</div>
<div class="t" style="left:509px;top:331px;width:136px;text-align:right;font-size:13px">2E+26</div>
<div class="t" style="left:509px;top:351px;width:136px;text-align:right;font-size:13px">0</div>
<!-- buttons -->
<div class="btn" style="left:765px;top:335px;width:64px;height:22px"></div>
<div class="t c" style="left:779px;top:340px">插入</div>
<div class="btn" style="left:765px;top:363px;width:64px;height:22px"></div>
<div class="t c" style="left:779px;top:368px">追加</div>
<div class="btn" style="left:765px;top:391px;width:64px;height:22px"></div>
<div class="t c" style="left:779px;top:396px">删除</div>
<div class="btn" style="left:765px;top:439px;width:64px;height:22px"></div>
<div class="t c" style="left:785px;top:444px">关闭</div>

<!-- status -->
<div class="t c" style="left:7px;top:713px">准备。</div>

</body></html>
